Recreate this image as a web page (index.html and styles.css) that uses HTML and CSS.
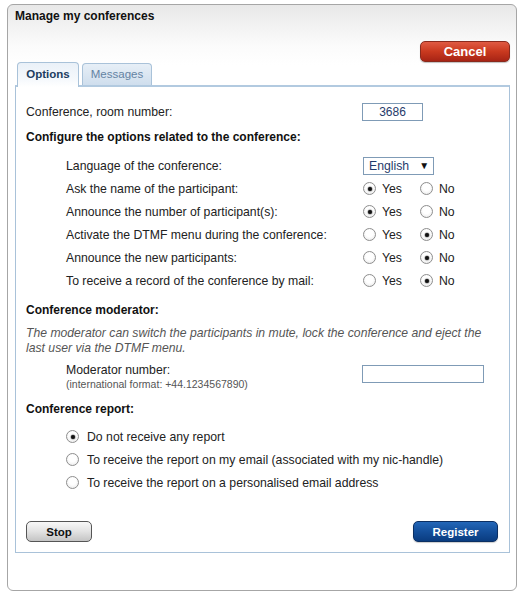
FILE: index.html
```html
<!DOCTYPE html>
<html>
<head>
<meta charset="utf-8">
<link rel="stylesheet" href="styles.css">
</head>
<body>
<div class="win">
  <div class="title">Manage my conferences</div>
  <div class="actions"><span class="btn btn-red">Cancel</span></div>
  <div class="tabs">
    <span class="tab tab-active">Options</span>
    <span class="tab">Messages</span>
  </div>
  <div class="panel">
    <div class="row row-room">
      <span class="lbl">Conference, room number:</span>
      <span class="field field-room">3686</span>
    </div>
    <div class="heading h1">Configure the options related to the conference:</div>
    <div class="opts">
      <div class="opt">
        <span class="lbl ind">Language of the conference:</span>
        <span class="select">English<span class="arrow">▼</span></span>
      </div>
      <div class="opt">
        <span class="lbl ind">Ask the name of the participant:</span>
        <span class="yn"><span class="r on"></span><span class="yes">Yes</span><span class="r"></span><span>No</span></span>
      </div>
      <div class="opt">
        <span class="lbl ind">Announce the number of participant(s):</span>
        <span class="yn"><span class="r on"></span><span class="yes">Yes</span><span class="r"></span><span>No</span></span>
      </div>
      <div class="opt">
        <span class="lbl ind">Activate the DTMF menu during the conference:</span>
        <span class="yn"><span class="r"></span><span class="yes">Yes</span><span class="r on"></span><span>No</span></span>
      </div>
      <div class="opt">
        <span class="lbl ind">Announce the new participants:</span>
        <span class="yn"><span class="r"></span><span class="yes">Yes</span><span class="r on"></span><span>No</span></span>
      </div>
      <div class="opt">
        <span class="lbl ind">To receive a record of the conference by mail:</span>
        <span class="yn"><span class="r"></span><span class="yes">Yes</span><span class="r on"></span><span>No</span></span>
      </div>
    </div>
    <div class="heading h2">Conference moderator:</div>
    <div class="note">The moderator can switch the participants in mute, lock the conference and eject the last user via the DTMF menu.</div>
    <div class="row row-mod">
      <div class="lbl ind">
        <div class="modlbl">Moderator number:</div>
        <div class="small">(international format: +44.1234567890)</div>
      </div>
      <span class="field field-mod"></span>
    </div>
    <div class="heading h3">Conference report:</div>
    <div class="report">
      <div class="rep"><span class="r on"></span><span>Do not receive any report</span></div>
      <div class="rep"><span class="r"></span><span>To receive the report on my email (associated with my nic-handle)</span></div>
      <div class="rep"><span class="r"></span><span>To receive the report on a personalised email address</span></div>
    </div>
    <div class="bottom">
      <span class="btn btn-gray">Stop</span>
      <span class="btn btn-blue">Register</span>
    </div>
  </div>
</div>
</body>
</html>
```

FILE: styles.css
```css
* { box-sizing: border-box; }
html, body { margin: 0; padding: 0; background: #fff; }
body {
  font-family: "Liberation Sans", Arial, sans-serif;
  font-size: 12.25px;
  color: #222;
}
.win {
  margin: 4px 0 0 7px;
  width: 510px;
  height: 587px;
  border: 1px solid #a6a6a6;
  border-radius: 6px;
  background: linear-gradient(#e8e8e8 0px, #fbfbfb 40px, #fff 60px);
  padding: 0 6px 0 7px;
}
.title {
  padding-top: 4px;
  font-weight: bold;
  font-size: 12px;
  line-height: 14px;
  color: #111;
}
.actions {
  margin-top: 18px;
  display: flex;
  justify-content: flex-end;
}
.btn {
  display: flex;
  align-items: center;
  justify-content: center;
  height: 21px;
  border-radius: 5px;
  font-weight: bold;
  font-size: 11.5px;
}
.btn-red {
  width: 90px;
  color: #fff;
  background: linear-gradient(#e05a43, #c9391f 50%, #a72415);
  border: 1px solid #8a2a1d;
  box-shadow: 0 1px 1px rgba(0,0,0,0.25);
  font-size: 13px;
}
.tabs {
  display: flex;
  align-items: flex-end;
  gap: 3px;
  padding-left: 2px;
  height: 23px;
  position: relative;
  z-index: 1;
}
.tab {
  display: flex;
  align-items: center;
  justify-content: center;
  width: 70px;
  height: 22px;
  border: 1px solid #a9c2d9;
  border-bottom: none;
  border-radius: 4px 4px 0 0;
  background: linear-gradient(#e7eff7, #cfdeed);
  color: #6483a3;
  font-size: 11.5px;
  padding-bottom: 1px;
}
.tab-active {
  width: 62px;
  height: 25px;
  margin-bottom: -2px;
  background: linear-gradient(#eaf1f8, #f6f9fc 70%, #fff);
  color: #1d3d60;
  font-weight: bold;
  padding-bottom: 3px;
}
.panel {
  height: 468px;
  border: 1px solid #a9c2d9;
  border-top: 2px solid #b2cae0;
  background: #fff;
  padding: 0 11px 0 10px;
}
.row { display: flex; }
.lbl { width: 336px; flex: none; }
.ind { padding-left: 40px; }
.row-room {
  margin-top: 16px;
  height: 18px;
  align-items: center;
}
.field {
  display: block;
  height: 18px;
  border: 1px solid #7f9bb6;
  color: #1f3b6b;
  text-align: center;
  line-height: 16px;
  font-size: 12px;
}
.field-room { width: 61px; }
.heading {
  font-weight: bold;
  font-size: 12px;
  line-height: 16px;
  color: #111;
}
.h1 { margin-top: 8px; }
.opts { margin-top: 9px; }
.opt {
  display: flex;
  align-items: center;
  height: 23px;
}
.select {
  margin-left: 1px;
  width: 71px;
  height: 18px;
  border: 1px solid #7f9bb6;
  color: #1f3b6b;
  display: flex;
  align-items: center;
  padding-left: 5px;
  line-height: 16px;
}
.arrow {
  margin-left: 10px;
  color: #111;
  font-size: 10px;
}
.yn {
  display: flex;
  align-items: center;
  margin-left: 1px;
}
.r {
  display: inline-block;
  position: relative;
  width: 13px;
  height: 13px;
  border-radius: 50%;
  border: 1px solid #8e8e8e;
  background: radial-gradient(circle at 50% 40%, #fff 40%, #e4e4e4);
  flex: none;
}
.r.on::after {
  content: "";
  position: absolute;
  left: 3.5px;
  top: 3.5px;
  width: 4px;
  height: 4px;
  border-radius: 50%;
  background: #111;
  box-shadow: 0 0 1px 0.5px rgba(0,0,0,0.5);
}
.yn .r + span { margin-left: 6px; }
.yes { width: 38px; }
.h2 { margin-top: 10px; }
.note {
  margin-top: 8px;
  font-style: italic;
  font-size: 12.2px;
  color: #555;
  line-height: 15px;
  max-width: 462px;
}
.row-mod { margin-top: 7px; }
.modlbl { line-height: 15px; }
.small {
  font-size: 10.5px;
  line-height: 13px;
  color: #555;
}
.field-mod {
  margin-top: 2px;
  width: 122px;
}
.h3 { margin-top: 10px; }
.report {
  margin-top: 8px;
  padding-left: 40px;
}
.rep {
  display: flex;
  align-items: center;
  height: 23px;
}
.rep .r { margin-right: 8px; }
.bottom {
  margin-top: 27px;
  display: flex;
  justify-content: space-between;
}
.btn-gray {
  width: 66px;
  color: #111;
  background: linear-gradient(#f8f8f8, #e2e2e2 50%, #c4c4c4);
  border: 1px solid #555;
}
.btn-blue {
  width: 85px;
  color: #fff;
  background: linear-gradient(#2367b8, #144f9b 50%, #0a3c80);
  border: 1px solid #0b2f63;
  box-shadow: 0 1px 1px rgba(0,0,0,0.2);
}
```
